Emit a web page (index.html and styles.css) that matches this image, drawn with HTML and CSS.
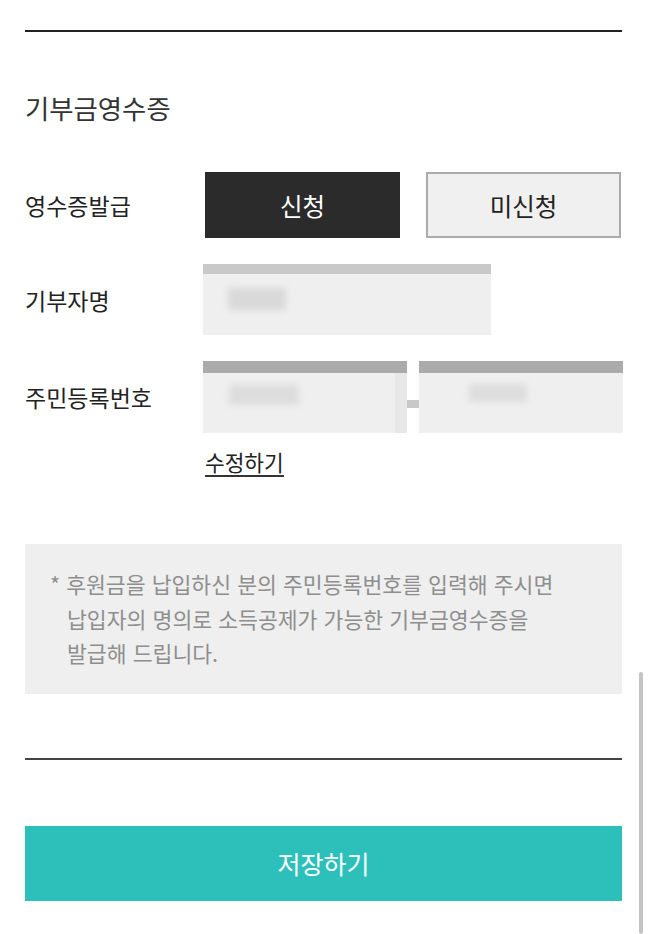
FILE: index.html
```html
<!DOCTYPE html>
<html lang="ko">
  <head>
    <meta charset="UTF-8" />
    <meta name="viewport" content="width=device-width, initial-scale=1.0" />
    <title>기부금영수증</title>
    <link rel="stylesheet" href="styles.css">
  </head>
  <body>
    <div class="page">
      <hr class="rule top">

      <h2 class="title">기부금영수증</h2>

      <div class="row">
        <div class="label">영수증발급</div>
        <div class="choices">
          <button class="choice on">신청</button>
          <button class="choice off">미신청</button>
        </div>
      </div>

      <div class="row">
        <div class="label">기부자명</div>
        <div class="field name">
          <span class="blur b1"></span>
        </div>
      </div>

      <div class="row">
        <div class="label">주민등록번호</div>
        <div class="ssn">
          <div class="field ssn-a"><span class="blur b2"></span></div>
          <span class="dash"></span>
          <div class="field ssn-b"><span class="blur b3"></span></div>
        </div>
      </div>

      <div class="edit-row">
        <a class="edit" href="#">수정하기</a>
      </div>

      <div class="notice">
        <p>* 후원금을 납입하신 분의 주민등록번호를 입력해 주시면<br>납입자의 명의로 소득공제가 가능한 기부금영수증을<br>발급해 드립니다.</p>
      </div>

      <hr class="rule bottom">

      <button class="save">저장하기</button>
    </div>
    <div class="scrollbar"></div>
  </body>
</html>
```

FILE: styles.css
```css
body {
  margin: 0;
  padding: 0;
  background-color: #fff;
  color: #222;
  font-family: "Noto Sans CJK KR", "Noto Sans", sans-serif;
  overflow: hidden;
}

.page {
  padding: 30px 27px 0 25px;
}

.rule {
  margin: 0;
  border: none;
  height: 2px;
}

.rule.top {
  background-color: #222;
}

.rule.bottom {
  background-color: #444;
  margin-top: 64px;
}

.title {
  margin: 59px 0 0;
  font-size: 26.4px;
  font-weight: normal;
  line-height: 34px;
  color: #333;
}

.row {
  display: flex;
  align-items: center;
  margin-top: 26px;
}

.row:first-of-type {
  margin-top: 47px;
}

.label {
  width: 178px;
  flex-shrink: 0;
  font-size: 23px;
  color: #222;
}

.choices {
  display: flex;
  gap: 26px;
  margin-left: 2px;
}

.choice {
  width: 195px;
  height: 66px;
  font-family: inherit;
  font-size: 24.5px;
  padding: 0;
  margin: 0;
  cursor: pointer;
}

.choice.on {
  background-color: #2b2b2b;
  color: #fff;
  border: 1px solid #2b2b2b;
}

.choice.off {
  background-color: #f0f0f0;
  color: #222;
  border: 2px solid #ababab;
}

.field {
  position: relative;
  background-color: #efefef;
  box-sizing: border-box;
}

.field.name {
  width: 288px;
  height: 71px;
  border-top: 10px solid #c9c9c9;
}

.ssn {
  display: flex;
  align-items: center;
}

.ssn .field {
  width: 204px;
  height: 72px;
  border-top: 12px solid #ababab;
}

.ssn-a {
  box-shadow: inset -12px 0 0 #e8e8e8;
}

.dash {
  width: 12px;
  height: 8px;
  margin-top: 14px;
  background-color: #c8c8c8;
}

/* masked personal data */
.blur {
  position: absolute;
  display: block;
  background-color: #d9d9d9;
  filter: blur(3px);
}

.b1 {
  left: 25px;
  top: 14px;
  width: 58px;
  height: 22px;
}

.b2 {
  left: 26px;
  top: 12px;
  width: 70px;
  height: 20px;
  opacity: 0.8;
}

.b3 {
  left: 50px;
  top: 11px;
  width: 58px;
  height: 18px;
  opacity: 0.8;
}

.edit-row {
  margin: 15px 0 0 180px;
}

.edit {
  display: inline-block;
  font-size: 21.4px;
  line-height: 27px;
  color: #222;
  text-decoration: none;
  border-bottom: 2px solid #333;
}

.notice {
  margin-top: 67px;
  background-color: #efefef;
  padding: 23px 20px 23px 42px;
}

.notice p {
  margin: 0;
  text-indent: -17px;
  font-size: 21.6px;
  line-height: 34.5px;
  color: #8e8e8e;
  white-space: nowrap;
}

.save {
  display: block;
  width: 100%;
  height: 75px;
  margin-top: 66px;
  border: none;
  background-color: #2dbfba;
  color: #fff;
  font-family: inherit;
  font-size: 25px;
  cursor: pointer;
}

.scrollbar {
  position: fixed;
  right: 6px;
  top: 672px;
  bottom: 0;
  width: 4px;
  border-radius: 2px;
  background-color: #c4c4c4;
}
```
